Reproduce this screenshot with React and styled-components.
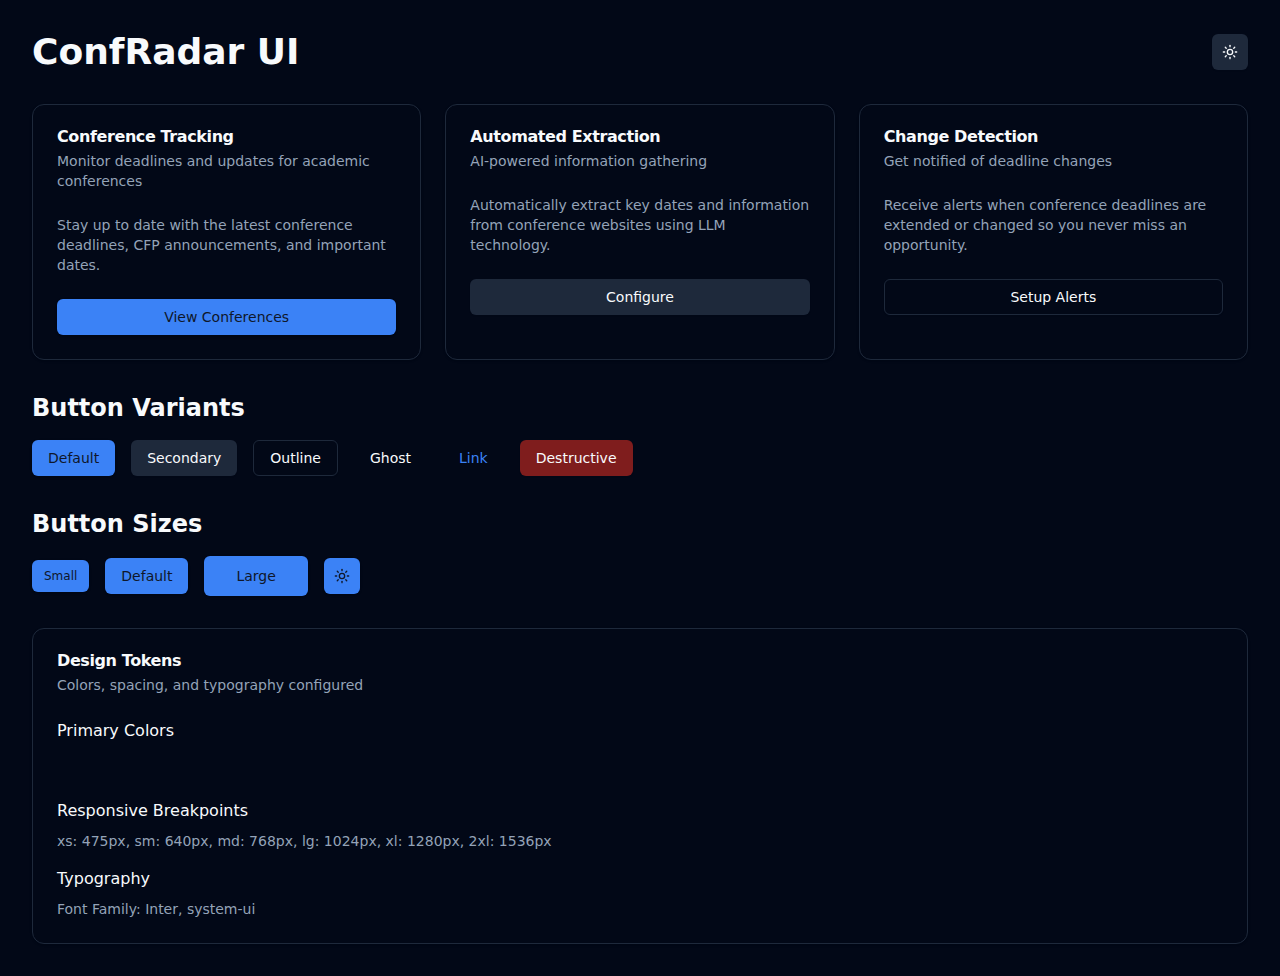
import React from "react";
import styled, { createGlobalStyle, css } from "styled-components";
import { Sun } from "lucide-react";

const GlobalStyle = createGlobalStyle`
  *, *::before, *::after { box-sizing: border-box; }
  body {
    margin: 0;
    background: #020817;
    color: #f8fafc;
    font-family: "DejaVu Sans", sans-serif;
    font-size: 16px;
    line-height: 24px;
  }
  h1, h2, h3, h4, p { margin: 0; }
`;

const shadow = "0 1px 3px 0 rgb(0 0 0 / 0.1), 0 1px 2px -1px rgb(0 0 0 / 0.1)";
const shadowSmall = "0 1px 2px 0 rgb(0 0 0 / 0.05)";

const Page = styled.main`
  min-height: 100vh;
  padding: 32px;
  display: flex;
  flex-direction: column;
  gap: 32px;
`;

const Header = styled.header`
  display: flex;
  align-items: center;
  justify-content: space-between;
`;

const PageTitle = styled.h1`
  font-size: 36px;
  line-height: 40px;
  font-weight: 700;
`;

const CardGrid = styled.div`
  display: grid;
  grid-template-columns: repeat(auto-fit, minmax(280px, 1fr));
  gap: 24px;
`;

const Card = styled.section`
  border: 1px solid #1e293b;
  border-radius: 12px;
  box-shadow: ${shadow};
  padding: 24px;
  display: flex;
  flex-direction: column;
  gap: 24px;
`;

const CardHeader = styled.div`
  display: flex;
  flex-direction: column;
  gap: 6px;
`;

const CardTitle = styled.h3`
  font-size: 16px;
  line-height: 16px;
  font-weight: 600;
  letter-spacing: -0.4px;
`;

const Muted = styled.p`
  font-size: 14px;
  line-height: 20px;
  color: #94a3b8;
`;

const variants = {
  primary: css`background: #3b82f6; color: #0f172a; box-shadow: ${shadow};`,
  secondary: css`background: #1e293b; color: #f8fafc; box-shadow: ${shadowSmall};`,
  outline: css`background: #020817; color: #f8fafc; border: 1px solid #1e293b; box-shadow: ${shadowSmall};`,
  ghost: css`background: transparent; color: #f8fafc;`,
  link: css`background: transparent; color: #3b82f6;`,
  destructive: css`background: #7f1d1d; color: #f8fafc; box-shadow: ${shadowSmall};`,
};

const sizes = {
  sm: css`height: 32px; padding: 0 12px; font-size: 12px;`,
  md: css`height: 36px; padding: 0 16px;`,
  lg: css`height: 40px; padding: 0 32px;`,
  icon: css`height: 36px; width: 36px; padding: 0;`,
};

const Button = styled.button`
  display: inline-flex;
  align-items: center;
  justify-content: center;
  border: 0;
  border-radius: 6px;
  font-family: inherit;
  font-size: 14px;
  line-height: 20px;
  font-weight: 500;
  white-space: nowrap;
  cursor: pointer;
  ${({ $size = "md" }) => sizes[$size]}
  ${({ $variant = "primary" }) => variants[$variant]}
`;

const Section = styled.section`
  display: flex;
  flex-direction: column;
  gap: 16px;
`;

const SectionTitle = styled.h2`
  font-size: 24px;
  line-height: 32px;
  font-weight: 600;
`;

const ButtonRow = styled.div`
  display: flex;
  flex-wrap: wrap;
  align-items: center;
  gap: 16px;
`;

const TokenList = styled.div`
  display: flex;
  flex-direction: column;
  gap: 16px;
`;

const TokenGroup = styled.div`
  display: flex;
  flex-direction: column;
  gap: 8px;
`;

const TokenTitle = styled.h4`
  font-size: 16px;
  line-height: 24px;
  font-weight: 500;
`;

const Swatches = styled.div`
  height: 32px;
`;

const features = [
  {
    title: "Conference Tracking",
    summary: "Monitor deadlines and updates for academic conferences",
    body: "Stay up to date with the latest conference deadlines, CFP announcements, and important dates.",
    action: "View Conferences",
    variant: "primary",
  },
  {
    title: "Automated Extraction",
    summary: "AI-powered information gathering",
    body: "Automatically extract key dates and information from conference websites using LLM technology.",
    action: "Configure",
    variant: "secondary",
  },
  {
    title: "Change Detection",
    summary: "Get notified of deadline changes",
    body: "Receive alerts when conference deadlines are extended or changed so you never miss an opportunity.",
    action: "Setup Alerts",
    variant: "outline",
  },
];

export default function App() {
  return (
    <Page>
      <GlobalStyle />
      <Header>
        <PageTitle>ConfRadar UI</PageTitle>
        <Button $variant="secondary" $size="icon" aria-label="Toggle theme">
          <Sun size={16} />
        </Button>
      </Header>

      <CardGrid>
        {features.map((feature) => (
          <Card key={feature.title}>
            <CardHeader>
              <CardTitle>{feature.title}</CardTitle>
              <Muted>{feature.summary}</Muted>
            </CardHeader>
            <Muted>{feature.body}</Muted>
            <Button $variant={feature.variant}>{feature.action}</Button>
          </Card>
        ))}
      </CardGrid>

      <Section>
        <SectionTitle>Button Variants</SectionTitle>
        <ButtonRow>
          <Button>Default</Button>
          <Button $variant="secondary">Secondary</Button>
          <Button $variant="outline">Outline</Button>
          <Button $variant="ghost">Ghost</Button>
          <Button $variant="link">Link</Button>
          <Button $variant="destructive">Destructive</Button>
        </ButtonRow>
      </Section>

      <Section>
        <SectionTitle>Button Sizes</SectionTitle>
        <ButtonRow>
          <Button $size="sm">Small</Button>
          <Button>Default</Button>
          <Button $size="lg">Large</Button>
          <Button $size="icon" aria-label="Light theme">
            <Sun size={16} />
          </Button>
        </ButtonRow>
      </Section>

      <Card>
        <CardHeader>
          <CardTitle>Design Tokens</CardTitle>
          <Muted>Colors, spacing, and typography configured</Muted>
        </CardHeader>
        <TokenList>
          <TokenGroup>
            <TokenTitle>Primary Colors</TokenTitle>
            <Swatches />
          </TokenGroup>
          <TokenGroup>
            <TokenTitle>Responsive Breakpoints</TokenTitle>
            <Muted>xs: 475px, sm: 640px, md: 768px, lg: 1024px, xl: 1280px, 2xl: 1536px</Muted>
          </TokenGroup>
          <TokenGroup>
            <TokenTitle>Typography</TokenTitle>
            <Muted>Font Family: Inter, system-ui</Muted>
          </TokenGroup>
        </TokenList>
      </Card>
    </Page>
  );
}
